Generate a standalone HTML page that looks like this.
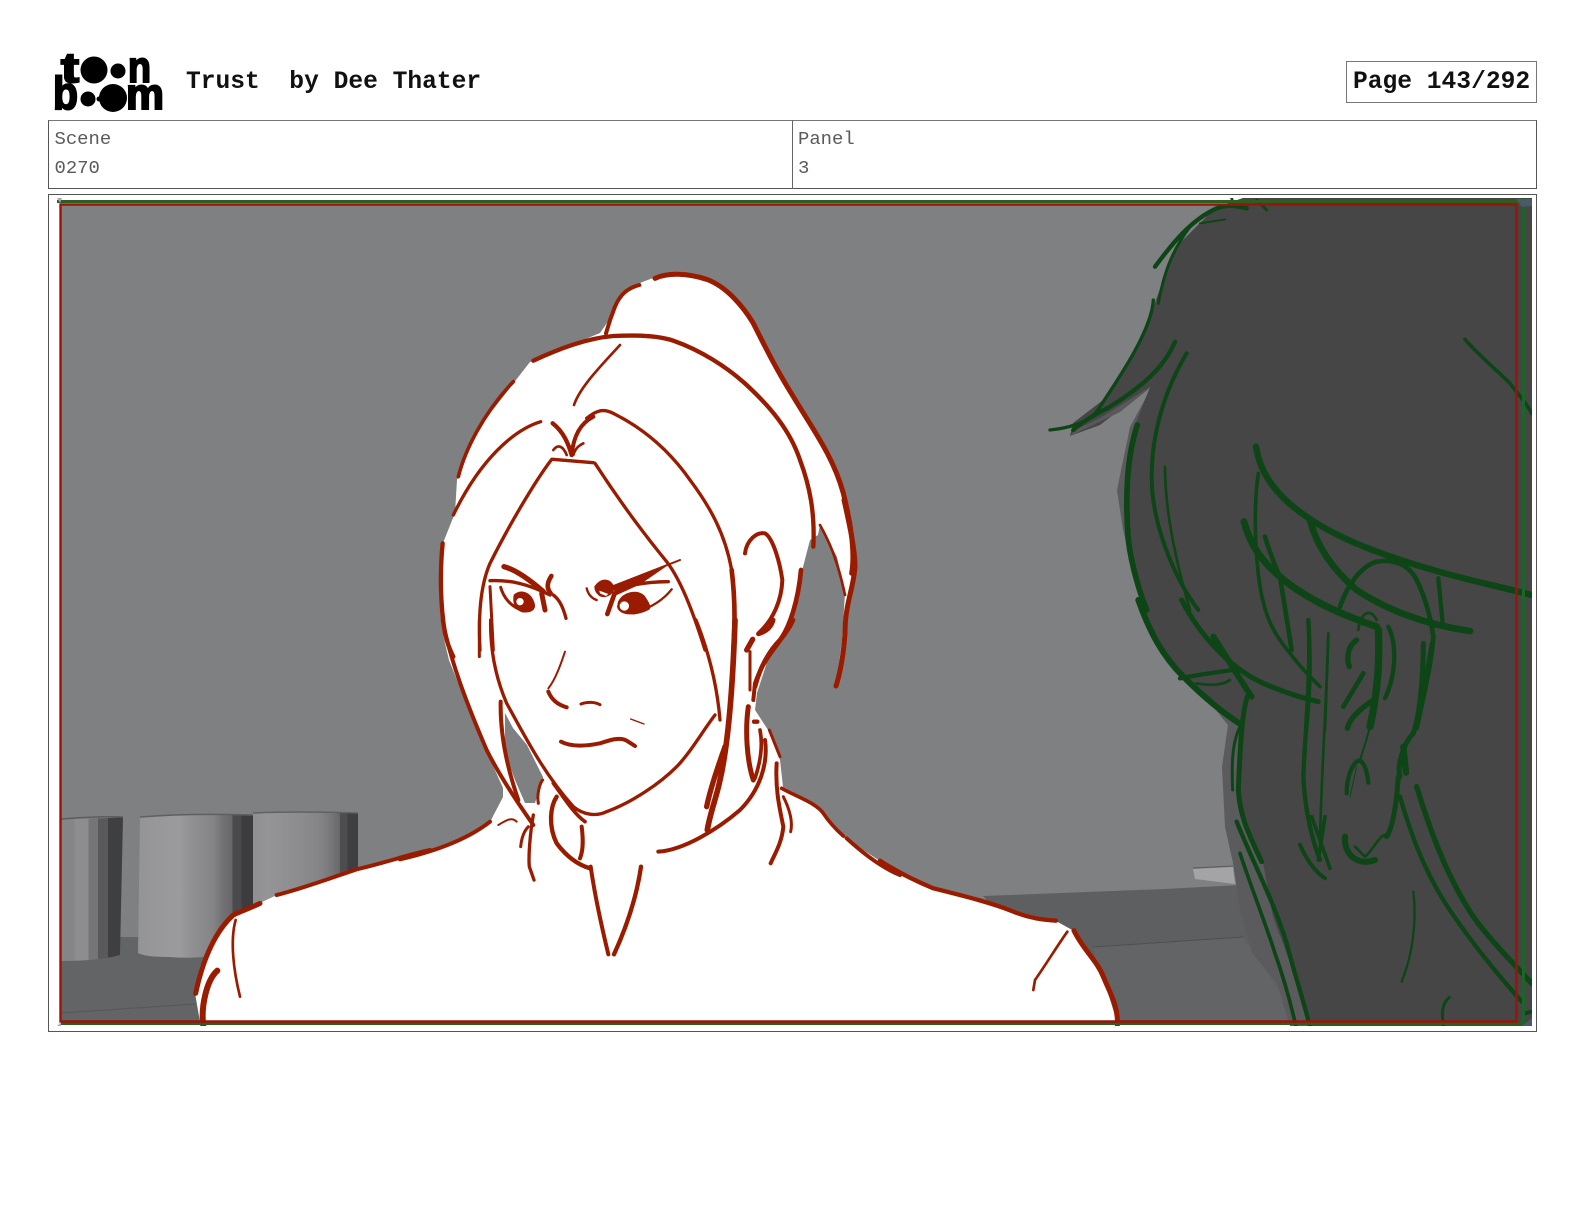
<!DOCTYPE html>
<html><head><meta charset="utf-8"><title>Trust by Dee Thater</title>
<style>
html,body{margin:0;padding:0;background:#fff}
body{position:relative;width:1584px;height:1224px;overflow:hidden;font-family:"Liberation Mono",monospace}
.t{position:absolute;white-space:pre;line-height:1}
.b{font-weight:bold;font-size:24.6px;color:#111}
.s{font-size:18.9px;color:#5a5a5a}
.box{position:absolute;box-sizing:border-box}
svg{position:absolute;left:0;top:0}
.r path{fill:none;stroke:#9a1c00;stroke-linecap:round;stroke-linejoin:round}
.g path{fill:none;stroke:#0d4516;stroke-linecap:round;stroke-linejoin:round}
</style></head>
<body>
<div class="t b" style="left:186px;top:71px">Trust  by Dee Thater</div>
<div class="box" style="left:1346px;top:61px;width:191px;height:42px;border:1px solid #777"></div>
<div class="t b" style="left:1353px;top:71px">Page 143/292</div>
<div class="box" style="left:48px;top:120px;width:1489px;height:69px;border:1px solid #555;border-top-color:#777"></div>
<div class="box" style="left:792px;top:120px;width:1px;height:69px;background:#666"></div>
<div class="t s" style="left:54.5px;top:130px">Scene</div>
<div class="t s" style="left:54.5px;top:159px">0270</div>
<div class="t s" style="left:798px;top:130px">Panel</div>
<div class="t s" style="left:798px;top:159px">3</div>
<div class="box" style="left:48px;top:194px;width:1489px;height:838px;border:1px solid #555"></div>

<svg width="1584" height="1224" viewBox="0 0 1584 1224">
<defs>
<clipPath id="c"><rect x="57" y="198" width="1475" height="828"/></clipPath>
<linearGradient id="c1" x1="0" x2="1" y1="0" y2="0">
<stop offset="0" stop-color="#858587"/><stop offset=".22" stop-color="#858587"/><stop offset=".22" stop-color="#8d8d8f"/><stop offset=".44" stop-color="#8d8d8f"/><stop offset=".44" stop-color="#757577"/><stop offset=".6" stop-color="#757577"/><stop offset=".6" stop-color="#59595c"/><stop offset=".76" stop-color="#59595c"/><stop offset=".76" stop-color="#3f3f41"/><stop offset="1" stop-color="#3f3f41"/>
</linearGradient>
<linearGradient id="c2" x1="0" x2="1" y1="0" y2="0">
<stop offset="0" stop-color="#949496"/><stop offset=".12" stop-color="#979799"/><stop offset=".36" stop-color="#9b9b9d"/><stop offset=".45" stop-color="#929294"/><stop offset=".55" stop-color="#8b8b8d"/><stop offset=".65" stop-color="#858587"/><stop offset=".73" stop-color="#737375"/><stop offset=".82" stop-color="#676769"/><stop offset=".82" stop-color="#4a4a4d"/><stop offset=".9" stop-color="#4a4a4d"/><stop offset=".9" stop-color="#3c3c3e"/><stop offset="1" stop-color="#3c3c3e"/>
</linearGradient>
<linearGradient id="c3" x1="0" x2="1" y1="0" y2="0">
<stop offset="0" stop-color="#8f8f91"/><stop offset=".14" stop-color="#959597"/><stop offset=".45" stop-color="#8c8c8e"/><stop offset=".65" stop-color="#848486"/><stop offset=".75" stop-color="#767678"/><stop offset=".83" stop-color="#676769"/><stop offset=".83" stop-color="#4d4d50"/><stop offset=".9" stop-color="#4d4d50"/><stop offset=".9" stop-color="#3f3f41"/><stop offset="1" stop-color="#3f3f41"/>
</linearGradient>
</defs>

<!-- logo -->
<g fill="#000">
<text x="61" y="82" font-family="Liberation Sans" font-weight="bold" font-size="42" textLength="18" lengthAdjust="spacingAndGlyphs" stroke="#000" stroke-width="2">t</text>
<circle cx="94" cy="70" r="13.5"/><circle cx="118" cy="71" r="7.5"/>
<text x="128" y="82" font-family="Liberation Sans" font-weight="bold" font-size="44" textLength="23" lengthAdjust="spacingAndGlyphs" stroke="#000" stroke-width="2">n</text>
<text x="53" y="109" font-family="Liberation Sans" font-weight="bold" font-size="46" textLength="25" lengthAdjust="spacingAndGlyphs" stroke="#000" stroke-width="2">b</text>
<circle cx="88" cy="99" r="7.5"/><circle cx="99" cy="99" r="2.5"/><circle cx="113" cy="98" r="14"/>
<text x="126" y="109" font-family="Liberation Sans" font-weight="bold" font-size="44" textLength="38" lengthAdjust="spacingAndGlyphs" stroke="#000" stroke-width="2">m</text>
</g>

<g clip-path="url(#c)">
<!-- wall -->
<rect x="61" y="204" width="1460" height="817" fill="#7f8082"/>
<!-- floor left -->
<rect x="61" y="937" width="170" height="84" fill="#636466"/>
<path d="M61 1013L195 1004" stroke="#555658" stroke-width="1" fill="none"/>
<!-- cylinders -->
<path d="M61 819Q100 819 123 817L120 955Q100 961 61 961Z" fill="url(#c1)"/>
<path d="M61 819Q100 816 123 817" stroke="#5c5c5e" stroke-width="1.5" fill="none"/>
<path d="M140 817Q190 813 253 815L253 950Q200 960 170 957Q145 957 138 953Z" fill="url(#c2)"/>
<path d="M140 817Q190 813 253 815" stroke="#606062" stroke-width="1.5" fill="none"/>
<path d="M253 813Q300 811 358 813L358 900L253 930Z" fill="url(#c3)"/>
<path d="M253 813Q300 811 358 813" stroke="#626264" stroke-width="1.5" fill="none"/>
<!-- floor right -->
<path d="M983 896L1165 889L1240 885L1300 1021L1100 1021Z" fill="#5e5f61"/>
<path d="M1093 947L1243 937L1300 1021L1110 1021Z" fill="#636466"/>
<path d="M1093 947L1243 937" stroke="#4e4f51" stroke-width="1" fill="none"/>
<path d="M1193 869L1233 867L1235 884L1195 879Z" fill="#a4a4a6"/>
<path d="M1193 868L1233 866" stroke="#5a5a5c" stroke-width="1"/>
<!-- person right -->
<path d="M1150 390L1130 427L1117 490L1123 530L1133 570L1150 630L1228 725L1222 767L1225 827L1233 863L1240 910L1252 953L1277 983L1290 1026L1532 1026L1532 600L1300 420Z" fill="#5b5b5d"/>
<path d="M1243 198L1216 207L1176 247L1157 297L1143 337L1107 397L1073 423L1070 436L1100 425L1150 387L1135 425L1127 490L1130 557L1135 580L1150 635L1183 677L1240 725L1238 783L1243 817L1263 862L1273 917L1293 970L1310 1026L1532 1026L1532 198Z" fill="#464647"/>
<path d="M1070 436L1075 430L1100 418L1145 390L1150 388L1120 412Z" fill="#59595b"/>

<!-- white body -->
<path fill="#fff" d="M200 1022L195 993L200 967L217 937L233 915L260 903L277 895L330 878L400 858L443 847L490 822L503 797L503 788L486 750L466 703L449 660L443 635L442 600L443 543L455 513L457 480L477 430L530 362L600 333L607 323L627 288L653 278L673 273L717 283L747 313L767 347L793 397L830 457L853 533L855 567L848 605L846 640L836 687L842 640L845 593L837 557L820 525L818 535L810 540L803 567L790 623L770 653L757 693L755 710L770 733L780 760L783 787L817 805L843 837L880 861L933 888L1013 912L1056 921L1074 931L1103 977L1117 1022Z"/>
<path fill="#7f8082" d="M505 713L513 728L527 745L543 777L540 787L535 803L525 803L515 780L505 753Z"/>

<!-- red art: crop 3 -->
<g class="r" transform="translate(400 250) scale(.33333)">
<path stroke-width="15" d="M765 85C800 68 860 68 920 88C980 110 1030 170 1060 220C1100 300 1130 360 1180 440C1240 540 1300 620 1330 730C1355 830 1365 910 1355 970"/>
<path stroke-width="12" d="M718 105C680 115 660 135 645 170C635 195 625 225 618 250"/>
<path stroke-width="13" d="M400 332C480 295 560 265 640 258C700 255 770 255 820 272C900 300 980 350 1040 405C1110 470 1170 540 1200 630C1230 710 1245 790 1240 890"/>
<path stroke-width="11" d="M175 680C195 600 250 490 340 395"/>
<path stroke-width="8" d="M660 285C610 340 540 410 522 465"/>
<path stroke-width="10" d="M422 515C340 540 240 630 160 795"/>
<path stroke-width="13" d="M458 520C490 545 505 580 515 615"/>
<path stroke-width="12" d="M580 500C540 520 520 560 515 615"/>
<path stroke-width="8" d="M460 600C475 580 490 590 500 615M550 580C530 590 525 600 520 615"/>
<path stroke-width="10" d="M458 628L580 638"/>
<path stroke-width="10" d="M455 628C400 700 320 840 270 940C240 1010 235 1100 240 1200"/>
<path stroke-width="10" d="M560 505C590 480 610 475 640 490C720 530 800 590 870 690C930 770 975 850 995 960"/>
<path stroke-width="14" d="M995 960C1005 1040 1005 1130 1000 1200"/>
<path stroke-width="10" d="M585 640C650 740 730 850 800 935C850 1000 890 1120 915 1200"/>
<path stroke-width="13" d="M128 880C120 960 120 1060 135 1150C140 1175 150 1200 160 1220"/>
<path stroke-width="9" d="M270 1010L280 1200"/>
</g>
<!-- eyes -->
<g class="r" transform="translate(480 550) scale(.33333)">
<path stroke-width="16" d="M72 50C110 60 150 90 190 125"/>
<path stroke-width="10" d="M30 92C90 90 140 100 210 135"/>
<path stroke-width="14" d="M214 78C200 100 200 115 212 130"/>
<path stroke-width="15" d="M185 130L195 180"/>
<path stroke-width="10" d="M220 135C240 150 250 175 258 205"/>
<path stroke-width="9" d="M62 112C70 140 90 170 130 182"/>
<path stroke-width="4" style="fill:#9a1c00" d="M103 135C125 118 152 128 162 160C168 180 150 187 128 185C108 180 98 160 103 135Z"/>
<path stroke-width="7" d="M320 115C325 135 335 145 350 150"/>
<path stroke-width="4" style="fill:#9a1c00" d="M345 110C360 88 385 83 398 105C410 125 380 147 360 137C350 130 345 120 345 110Z"/>
<path stroke-width="6" style="fill:#9a1c00" d="M400 108L600 30L555 48L480 100L410 132Z"/>
<path stroke-width="10" d="M420 115C470 100 520 95 565 95"/>
<path stroke-width="14" d="M404 130L382 192"/>
<path stroke-width="4" style="fill:#9a1c00" d="M416 155C430 128 470 118 492 138C507 160 512 170 507 177C470 197 418 197 413 170Z"/>
<path stroke-width="7" d="M575 118C550 150 510 175 460 190"/>
</g>
<g transform="translate(480 550) scale(.33333)" fill="#fff">
<circle cx="120" cy="155" r="11"/><circle cx="433" cy="168" r="14"/>
<path d="M358 122L385 132L378 138L360 130Z"/>
</g>
<!-- red art: crop 4 -->
<g class="r" transform="translate(400 620) scale(.33333)">
<path stroke-width="12" d="M0 718C100 695 200 660 270 605"/>
<path stroke-width="12" d="M128 0C150 120 200 250 260 390C290 450 340 530 400 615"/>
<path stroke-width="9" d="M238 0L238 110"/>
<path stroke-width="10" d="M272 0C270 100 290 180 320 250C370 340 430 460 520 560C550 585 590 590 620 575C700 545 780 490 830 440C870 400 910 330 945 285"/>
<path stroke-width="12" d="M302 245C300 340 320 440 355 540"/>
<path stroke-width="9" d="M415 550C410 520 420 490 428 480"/>
<path stroke-width="6" d="M295 615C320 600 335 590 350 605"/>
<path stroke-width="9" d="M362 680C365 650 375 630 385 620"/>
<path stroke-width="10" d="M400 585C390 640 385 710 388 740L402 780"/>
<path stroke-width="13" d="M470 530C450 560 445 620 470 670C500 710 535 735 570 745"/>
<path stroke-width="11" d="M460 490C490 530 520 580 555 605"/>
<path stroke-width="12" d="M545 620C550 660 550 690 540 715"/>
<path stroke-width="6" d="M495 95C480 140 465 180 445 205"/>
<path stroke-width="12" d="M445 215C455 240 475 255 500 262"/>
<path stroke-width="9" d="M543 252C560 245 585 245 600 254"/>
<path stroke-width="4" d="M692 297L732 312"/>
<path stroke-width="12" d="M483 365C510 380 550 380 600 370C630 360 660 350 680 362L705 378"/>
<path stroke-width="12" d="M572 740C585 830 605 920 625 1003"/>
<path stroke-width="13" d="M723 740C710 830 680 920 642 1003"/>
<path stroke-width="10" d="M888 0C920 80 950 180 960 300"/>
<path stroke-width="17" d="M1005 0C1000 150 990 350 960 480C950 530 930 580 922 630"/>
<path stroke-width="16" d="M975 380C950 450 930 510 920 560"/>
<path stroke-width="12" d="M775 695C850 690 950 630 1020 570C1080 510 1105 430 1095 360"/>
<path stroke-width="9" d="M1050 95L1050 210"/>
<path stroke-width="16" d="M1058 58L1040 90"/>
<path stroke-width="13" d="M1075 42C1100 35 1115 20 1120 0"/>
<path stroke-width="12" d="M1180 0C1160 50 1090 110 1065 190L1060 240"/>
<path stroke-width="15" d="M1045 260C1035 330 1040 420 1060 480"/>
<path stroke-width="13" d="M1062 305L1072 305"/>
<path stroke-width="11" d="M1080 330C1090 380 1080 430 1065 475"/>
<path stroke-width="9" d="M1108 330L1140 410"/>
<path stroke-width="12" d="M1130 430C1125 510 1140 570 1150 620C1145 670 1125 700 1112 730"/>
<path stroke-width="9" d="M1150 530C1165 560 1180 600 1172 635"/>
<path stroke-width="11" d="M1145 505C1190 530 1250 550 1270 580C1290 610 1310 630 1330 648"/>
<path stroke-width="12" d="M1340 655C1400 710 1450 745 1500 765"/>
<path stroke-width="9" d="M1335 0C1335 60 1325 130 1308 198"/>
</g>
<!-- ear / tail -->
<g class="r" transform="translate(720 500) scale(.33333)">
<path stroke-width="12" d="M75 160C80 120 110 95 135 100C160 115 180 190 187 240C185 300 160 360 115 400"/>
<path stroke-width="14" d="M243 210C235 300 210 380 180 420C150 450 120 500 105 560"/>
<path stroke-width="8" d="M300 75C325 120 350 170 375 285"/>
<path stroke-width="15" d="M372 0C390 80 405 150 405 200C400 270 375 310 375 400C370 470 360 520 348 558"/>
</g>
<!-- shoulders -->
<g class="r" transform="translate(30 780) scale(.33333)">
<path stroke-width="12" d="M740 345C820 325 900 295 980 268C1060 250 1130 225 1200 210"/>
<path stroke-width="15" d="M690 370C660 385 630 395 610 405C560 450 520 530 497 640"/>
<path stroke-width="18" d="M562 572C530 600 512 680 520 738"/>
<path stroke-width="8" d="M617 420C600 480 610 570 630 650"/>
</g>
<g class="r" transform="translate(880 840) scale(.33333)">
<path stroke-width="13" d="M0 62C50 95 100 120 160 145C260 170 340 190 400 215C450 235 490 240 528 242"/>
<path stroke-width="15" d="M582 272C610 330 650 360 670 410C695 470 715 500 712 558"/>
<path stroke-width="8" d="M562 275C530 320 500 370 465 420L460 450"/>
</g>

<!-- green art -->
<g class="g" transform="translate(1030 190) scale(.33333)">
<path stroke-width="13" d="M375 230C420 170 480 90 560 55C590 45 610 45 650 55"/>
<path stroke-width="6" d="M510 100L585 88"/>
<path stroke-width="9" d="M385 340C400 260 420 190 480 110"/>
<path stroke-width="8" d="M605 25L610 40M680 30L710 60"/>
<path stroke-width="10" d="M370 330C365 420 270 560 200 665C170 700 110 715 60 720"/>
<path stroke-width="13" d="M435 455C400 540 320 600 240 650C200 670 150 700 130 720"/>
<path stroke-width="12" d="M470 490C410 590 365 720 365 860C365 1000 430 1160 505 1260"/>
<path stroke-width="17" d="M322 705C290 800 285 930 295 1050C305 1130 330 1210 350 1260"/>
<path stroke-width="8" d="M405 830C405 950 430 1090 480 1260"/>
<path stroke-width="11" d="M1305 448C1340 490 1400 540 1440 580C1470 620 1490 640 1505 670"/>
</g>
<g class="g" transform="translate(1200 430) scale(.33333)">
<path stroke-width="19" d="M168 50C180 130 230 200 320 260C420 330 560 380 700 420C800 450 900 470 995 495"/>
<path stroke-width="11" d="M175 130C160 230 165 370 180 470C195 560 220 610 270 670C300 710 330 740 360 770"/>
<path stroke-width="21" d="M132 275C150 340 180 390 240 440C320 510 440 560 530 590"/>
<path stroke-width="14" d="M195 320C210 370 230 420 240 440L275 660"/>
<path stroke-width="20" d="M330 270C350 350 400 420 470 480C560 540 680 585 810 603"/>
<path stroke-width="14" d="M420 530C440 470 480 410 530 395C590 385 630 410 650 450C680 510 695 580 700 620C695 700 670 800 650 895"/>
<path stroke-width="13" d="M715 445L728 580"/>
<path stroke-width="8" d="M475 600C480 550 510 530 530 570"/>
<path stroke-width="16" d="M470 630C440 650 440 690 448 710"/>
<path stroke-width="14" d="M490 730L430 830"/>
<path stroke-width="22" d="M535 600C540 700 530 800 510 890"/>
<path stroke-width="13" d="M565 590C590 640 590 730 555 805"/>
<path stroke-width="16" d="M520 810C490 830 450 860 442 895"/>
<path stroke-width="10" d="M325 570C335 690 330 790 320 900"/>
<path stroke-width="8" d="M385 615L375 900"/>
</g>
<g class="g" transform="translate(1130 600) scale(.33333)">
<path stroke-width="18" d="M25 0C60 100 100 170 160 230C220 290 280 340 335 375"/>
<path stroke-width="15" d="M155 0C200 90 290 200 400 250C470 280 520 295 565 305"/>
<path stroke-width="13" d="M150 235C200 225 270 215 330 207"/>
<path stroke-width="8" d="M200 250C240 258 280 255 300 240"/>
<path stroke-width="18" d="M250 110C290 170 330 240 365 290"/>
<path stroke-width="15" d="M352 290C335 340 330 450 325 570C330 650 355 700 395 785"/>
<path stroke-width="9" d="M330 380C305 430 305 500 308 570"/>
<path stroke-width="13" d="M320 665C370 790 430 900 470 1030C490 1110 520 1200 540 1280"/>
<path stroke-width="11" d="M330 760C370 880 410 980 435 1060C460 1130 480 1200 498 1280"/>
<path stroke-width="13" d="M535 60C545 200 525 400 520 530C525 640 550 730 570 780"/>
<path stroke-width="8" d="M595 100C590 300 575 500 570 720"/>
<path stroke-width="11" d="M585 650L565 780"/>
<path stroke-width="12" d="M510 735C530 780 555 815 585 835"/>
<path stroke-width="11" d="M545 650L600 805"/>
<path stroke-width="6" d="M745 280C730 350 710 420 690 480"/>
<path stroke-width="13" d="M650 580C650 530 670 480 690 482C705 490 712 520 715 548"/>
<path stroke-width="3" d="M680 500L660 590"/>
<path stroke-width="15" d="M880 130C880 230 870 340 850 400C820 430 800 500 810 530"/>
<path stroke-width="11" d="M905 130L860 380"/>
<path stroke-width="19" d="M820 440L828 518"/>
<path stroke-width="15" d="M805 530C800 600 790 680 770 710"/>
<path stroke-width="8" d="M770 705C750 700 730 750 705 770L675 740"/>
<path stroke-width="18" d="M645 710C640 760 680 800 735 780"/>
<path stroke-width="13" d="M810 590C850 730 900 850 980 960C1050 1060 1110 1130 1175 1205"/>
<path stroke-width="16" d="M860 560C900 690 950 830 1030 950C1080 1020 1150 1090 1205 1150"/>
<path stroke-width="7" d="M850 875C860 960 850 1060 815 1145"/>
<path stroke-width="9" d="M958 1192C935 1210 935 1240 940 1280"/>
<path stroke-width="12" d="M1185 1240L1205 1235"/>
</g>

<!-- frame guides -->
<path d="M61 1023.5H1532" stroke="#2f5c20" stroke-width="3" fill="none"/>
<path d="M57 201.5H1532" stroke="#2f5c20" stroke-width="3" fill="none"/>
<path d="M1523.5 198V1026" stroke="#1e6428" stroke-width="3" fill="none"/>
<path d="M60.5 204.5H1516.5V1021.5H60.5Z" stroke="#9a1408" stroke-width="2.4" fill="none"/>
<path d="M1516 199L1532 199L1532 206L1522 207Z" fill="#4a5a66"/>
<path d="M1522 1026L1532 1026L1532 1018Z" fill="#4a5a66"/>
<path d="M57 1026L61 1022L61 1026Z" fill="#9fb6cc"/>
<path d="M57 198L62 198L60 203Z" fill="#9fa8b8"/>
</g>
</svg>
</body></html>
